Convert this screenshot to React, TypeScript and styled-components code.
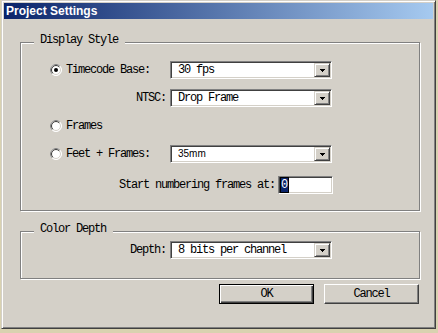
import React from "react";
import styled, { createGlobalStyle } from "styled-components";

const GlobalStyle = createGlobalStyle`
  html, body { margin: 0; padding: 0; }
  body {
    background: #d9d2b0;
    width: 438px;
    height: 333px;
    overflow: hidden;
    font-family: "Liberation Mono", "Courier New", monospace;
  }
`;

const Window = styled.div`
  box-sizing: border-box;
  margin: 0 0 0 1px;
  width: 435px;
  height: 329px;
  background: #d4d0c8;
  border: 1px solid;
  border-color: #d4d0c8 #404040 #404040 #d4d0c8;
  box-shadow: inset 1px 1px 0 #ffffff, inset -1px -1px 0 #808080;
  padding: 2px;
  display: flex;
  flex-direction: column;
`;

const TitleBar = styled.div`
  height: 16px;
  line-height: 16px;
  padding-left: 2px;
  background: linear-gradient(to right, #0a246a, #a6caf0);
  color: #ffffff;
  font-family: "Liberation Sans", Arial, sans-serif;
  font-weight: bold;
  font-size: 12px;
  white-space: nowrap;
`;

const Content = styled.div`
  padding: 0 13px 0 16px;
  display: flex;
  flex-direction: column;
`;

const GroupBox = styled.div<{ $top: number }>`
  margin-top: ${(p) => p.$top}px;
  width: 400px;
  box-sizing: border-box;
  border: 1px solid #808080;
  box-shadow: inset 1px 1px 0 #ffffff, 1px 1px 0 #ffffff;
  display: flex;
  flex-direction: column;
`;

const Legend = styled.div`
  align-self: flex-start;
  margin: -10px 0 0 13px;
  padding: 0 7px 0 6px;
  background: #d4d0c8;
  font-size: 12px;
  line-height: 14px;
  letter-spacing: -1.2px;
  color: #000;
  white-space: nowrap;
`;

const GroupBody = styled.div<{ $pt: number; $pb: number }>`
  padding: ${(p) => p.$pt}px 0 ${(p) => p.$pb}px 29px;
  display: grid;
  grid-template-columns: 116px 162px;
  grid-auto-rows: auto;
  column-gap: 4px;
  row-gap: 10px;
  align-items: center;
`;

const Label = styled.span<{ $right?: boolean }>`
  font-size: 12px;
  line-height: 18px;
  letter-spacing: -1.2px;
  color: #000;
  white-space: nowrap;
  text-align: ${(p) => (p.$right ? "right" : "left")};
`;

const RadioRow = styled.label<{ $span?: boolean }>`
  display: flex;
  align-items: center;
  gap: 4px;
  height: 18px;
  ${(p) => (p.$span ? "grid-column: 1 / span 2;" : "")}
`;

const FullRow = styled.div`
  grid-column: 1 / span 2;
  height: 18px;
  padding-top: 3px;
  display: flex;
  align-items: center;
  justify-content: flex-end;
  gap: 3px;
  margin-right: -1px;
`;

const Select = styled.div`
  box-sizing: border-box;
  width: 162px;
  height: 18px;
  padding: 1px;
  background: #ffffff;
  border: 1px solid;
  border-color: #808080 #ffffff #ffffff #808080;
  box-shadow: inset 1px 1px 0 #404040, inset -1px -1px 0 #d4d0c8;
  display: flex;
  align-items: stretch;
`;

const SelectText = styled.span<{ $sans?: boolean }>`
  flex: 1;
  padding-left: 6px;
  line-height: 14px;
  color: #000;
  white-space: nowrap;
  font-family: ${(p) =>
    p.$sans ? '"Liberation Sans", Arial, sans-serif' : '"Liberation Mono", "Courier New", monospace'};
  font-size: ${(p) => (p.$sans ? "10px" : "12px")};
  letter-spacing: ${(p) => (p.$sans ? "0" : "-1.2px")};
`;

const ArrowButton = styled.span`
  box-sizing: border-box;
  width: 16px;
  background: #d4d0c8;
  border: 1px solid;
  border-color: #d4d0c8 #404040 #404040 #d4d0c8;
  box-shadow: inset 1px 1px 0 #ffffff, inset -1px -1px 0 #808080;
  display: flex;
  align-items: center;
  justify-content: center;
`;

const NumberInput = styled.div`
  box-sizing: border-box;
  width: 55px;
  height: 18px;
  padding: 1px 1px 1px 2px;
  background: #ffffff;
  border: 1px solid;
  border-color: #808080 #ffffff #ffffff #808080;
  box-shadow: inset 1px 1px 0 #404040, inset -1px -1px 0 #d4d0c8;
  display: flex;
  align-items: center;
`;

const Selected = styled.span`
  background: #0a246a;
  color: #ffffff;
  font-size: 12px;
  line-height: 14px;
  letter-spacing: -1.2px;
  padding-right: 1px;
  outline: 1px solid #000;
`;

const ButtonRow = styled.div`
  margin-top: 5px;
  width: 400px;
  box-sizing: border-box;
  padding-right: 1px;
  display: flex;
  justify-content: flex-end;
  gap: 10px;
`;

const Button = styled.button<{ $default?: boolean }>`
  box-sizing: border-box;
  width: 95px;
  height: 20px;
  padding: 0;
  margin: 0;
  background: #d4d0c8;
  font-family: "Liberation Mono", "Courier New", monospace;
  font-size: 12px;
  letter-spacing: -1.2px;
  color: #000;
  border: 1px solid;
  border-color: ${(p) => (p.$default ? "#000 #000 #000 #000" : "#ffffff #404040 #404040 #ffffff")};
  box-shadow: ${(p) =>
    p.$default
      ? "inset 1px 1px 0 #ffffff, inset -1px -1px 0 #404040, inset -2px -2px 0 #808080"
      : "inset -1px -1px 0 #808080, inset 1px 1px 0 #d4d0c8"};
`;

const Radio = ({ checked }: { checked?: boolean }) => (
  <svg width="12" height="12" viewBox="0 0 12 12">
    <circle cx="6" cy="6" r="5.5" fill="#ffffff" stroke="#ffffff" strokeWidth="1" />
    <path d="M2.1 9.9 A5.5 5.5 0 0 1 9.9 2.1" fill="none" stroke="#808080" strokeWidth="1" />
    <circle cx="6" cy="6" r="4.5" fill="#ffffff" stroke="#d4d0c8" strokeWidth="1" />
    <path d="M2.8 9.2 A4.5 4.5 0 0 1 9.2 2.8" fill="none" stroke="#404040" strokeWidth="1" />
    {checked && <circle cx="6" cy="6" r="2" fill="#000000" />}
  </svg>
);

const Arrow = () => (
  <svg width="5" height="3" viewBox="0 0 5 3" shapeRendering="crispEdges">
    <rect x="0" y="0" width="5" height="1" fill="#000" />
    <rect x="1" y="1" width="3" height="1" fill="#000" />
    <rect x="2" y="2" width="1" height="1" fill="#000" />
  </svg>
);

const Dropdown = ({ value, sans }: { value: string; sans?: boolean }) => (
  <Select>
    <SelectText $sans={sans}>{value}</SelectText>
    <ArrowButton>
      <Arrow />
    </ArrowButton>
  </Select>
);

export default function App() {
  return (
    <>
      <GlobalStyle />
      <Window>
        <TitleBar>Project Settings</TitleBar>
        <Content>
          <GroupBox $top={23}>
            <Legend>Display Style</Legend>
            <GroupBody $pt={14} $pb={16}>
              <RadioRow>
                <Radio checked />
                <Label>Timecode Base:</Label>
              </RadioRow>
              <Dropdown value="30 fps" />
              <Label $right>NTSC:</Label>
              <Dropdown value="Drop Frame" />
              <RadioRow $span>
                <Radio />
                <Label>Frames</Label>
              </RadioRow>
              <RadioRow>
                <Radio />
                <Label>Feet + Frames:</Label>
              </RadioRow>
              <Dropdown value="35mm" sans />
              <FullRow>
                <Label>Start numbering frames at:</Label>
                <NumberInput>
                  <Selected>0</Selected>
                </NumberInput>
              </FullRow>
            </GroupBody>
          </GroupBox>
          <GroupBox $top={20}>
            <Legend>Color Depth</Legend>
            <GroupBody $pt={5} $pb={19}>
              <Label $right>Depth:</Label>
              <Dropdown value="8 bits per channel" />
            </GroupBody>
          </GroupBox>
          <ButtonRow>
            <Button $default>OK</Button>
            <Button>Cancel</Button>
          </ButtonRow>
        </Content>
      </Window>
    </>
  );
}
